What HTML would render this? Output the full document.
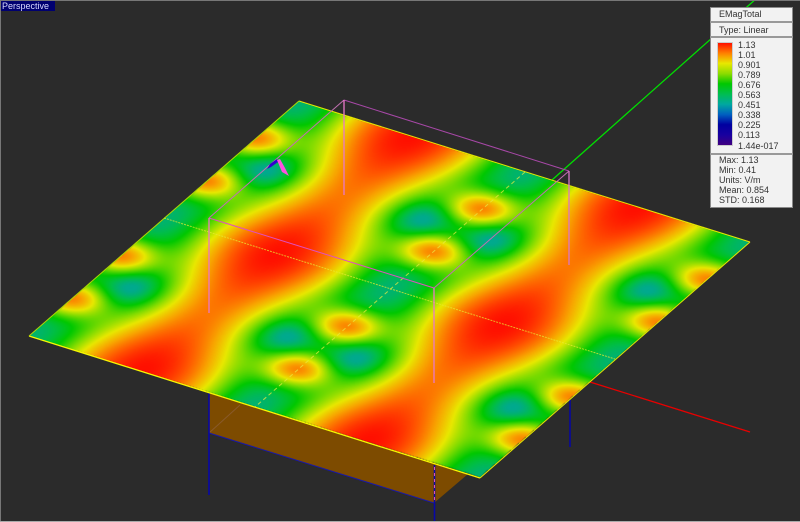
<!DOCTYPE html>
<html><head><meta charset="utf-8">
<style>
html,body{margin:0;padding:0;background:#2b2b2b}
#v{position:relative;width:800px;height:522px;overflow:hidden;background:#2b2b2b;font-family:"Liberation Sans",sans-serif}
#v>svg,#v>canvas{position:absolute;left:0;top:0}
#bt{position:absolute;left:0;top:0;width:800px;height:1px;background:#777}
#bl{position:absolute;left:0;top:0;width:1px;height:522px;background:#777}
#bb{position:absolute;left:0;top:521px;width:800px;height:1px;background:#aaa}
#pl{position:absolute;left:1px;top:1px;width:54px;height:10px;background:#000070;color:#d8d8ff;font-size:9px;line-height:10px;padding-left:1px;box-sizing:border-box}
#pn{position:absolute;left:710px;top:7px;width:83px;height:201px;background:#f2f2f2;box-shadow:0 0 0 1px #8a8a8a inset;font-size:9px;color:#333}
.s{position:absolute;left:0;width:83px;height:2px;background:#999}
.t{position:absolute;white-space:nowrap;line-height:10px}
#bar{position:absolute;left:8px;top:36px;width:14px;height:102px;background:linear-gradient(to bottom,#ff1000 0%,#ff8000 10%,#e8e800 20%,#8cdc00 30%,#00c800 40%,#00be50 50%,#00a8a0 60%,#0060c0 70%,#0000a0 80%,#1800a0 90%,#400080 100%);box-shadow:0 0 0 1px #ccc}
</style></head><body><div id="v">
<svg width="800" height="522" viewBox="0 0 800 522">
<polygon points="209,393 209,433 434,503 468,474 480,478" fill="#7d4b00"/>
<line x1="209" y1="433" x2="240" y2="405" stroke="#8a5a2a" stroke-width="1"/>
<line x1="209" y1="433" x2="434" y2="503" stroke="#1818a8" stroke-width="1"/>
<line x1="209" y1="393" x2="209" y2="495" stroke="#0808a8" stroke-width="1.6"/>
<line x1="434.5" y1="465" x2="434.5" y2="522" stroke="#0808a8" stroke-width="1.6"/>
<line x1="434.5" y1="467" x2="434.5" y2="503" stroke="#e050c0" stroke-width="1" stroke-dasharray="3 3"/>
<line x1="570" y1="400" x2="570" y2="447" stroke="#0808a0" stroke-width="1.6"/>
<line x1="590" y1="382" x2="750" y2="432" stroke="#e80000" stroke-width="1.3"/>
<line x1="552" y1="180" x2="757" y2="-2" stroke="#00e000" stroke-width="1.3"/>
<line x1="344" y1="100" x2="569" y2="171" stroke="#a848a8" stroke-width="1"/>
</svg>
<canvas id="c" width="800" height="522"></canvas>
<svg width="800" height="522" viewBox="0 0 800 522">
<g fill="none">
<line x1="299" y1="101" x2="750" y2="242" stroke="#e8e800" stroke-width="1"/>
<line x1="750" y1="242" x2="480" y2="478" stroke="#e8e800" stroke-width="1"/>
<line x1="480" y1="478" x2="29" y2="336" stroke="#f8f800" stroke-width="1.3"/>
<line x1="29" y1="336" x2="299" y2="101" stroke="#b0d800" stroke-width="1"/>
<line x1="164" y1="218" x2="615" y2="359" stroke="#e8e830" stroke-width="1" stroke-dasharray="2 1" opacity=".75"/>
<line x1="525" y1="172" x2="255" y2="407" stroke="#e8e840" stroke-width="1" stroke-dasharray="4 3" opacity=".75"/>
<line x1="344" y1="100" x2="209" y2="218" stroke="#c070b0" stroke-width="1"/>
<line x1="209" y1="218" x2="434" y2="288" stroke="#e050c0" stroke-width="1"/>
<line x1="434" y1="288" x2="569" y2="171" stroke="#c070b0" stroke-width="1"/>
<line x1="344" y1="100" x2="344" y2="195" stroke="#e878c8" stroke-width="1.3"/>
<line x1="569" y1="171" x2="569" y2="265" stroke="#d878c8" stroke-width="1.3"/>
<line x1="434" y1="288" x2="434" y2="383" stroke="#e878c8" stroke-width="1.3"/>
<line x1="209" y1="218" x2="209" y2="313" stroke="#e878c8" stroke-width="1.3"/>
</g>
<polygon points="277,159 278,162 271,167 267,169 270,164" fill="#3000d0"/>
<polygon points="277,160 280,159 285,168 289,176 282,172" fill="#ff50e0"/>
</svg>
<div id="bt"></div><div id="bl"></div><div id="bb"></div>
<div id="pl">Perspective</div>
<div id="pn">
<div class="t" style="left:9px;top:2px">EMagTotal</div>
<div class="s" style="top:14px"></div>
<div class="t" style="left:9px;top:18px">Type: Linear</div>
<div class="s" style="top:29px"></div>
<div id="bar"></div>
<div class="t" style="left:28px;top:33px">1.13</div>
<div class="t" style="left:28px;top:43px">1.01</div>
<div class="t" style="left:28px;top:53px">0.901</div>
<div class="t" style="left:28px;top:63px">0.789</div>
<div class="t" style="left:28px;top:73px">0.676</div>
<div class="t" style="left:28px;top:83px">0.563</div>
<div class="t" style="left:28px;top:93px">0.451</div>
<div class="t" style="left:28px;top:103px">0.338</div>
<div class="t" style="left:28px;top:113px">0.225</div>
<div class="t" style="left:28px;top:123px">0.113</div>
<div class="t" style="left:28px;top:134px">1.44e-017</div>
<div class="s" style="top:146px"></div>
<div class="t" style="left:9px;top:148px">Max: 1.13</div>
<div class="t" style="left:9px;top:158px">Min: 0.41</div>
<div class="t" style="left:9px;top:168px">Units: V/m</div>
<div class="t" style="left:9px;top:178px">Mean: 0.854</div>
<div class="t" style="left:9px;top:188px">STD: 0.168</div>
</div>
<script>
(function(){
var c=document.getElementById('c'),x=c.getContext('2d'),im=x.createImageData(800,522),d=im.data;
var st=[[.36,0,165,160],[.42,0,170,140],[.50,0,190,70],[.58,0,200,0],[.70,130,220,0],[.80,232,232,0],[.90,248,165,0],[1.0,255,90,0],[1.10,255,15,0]];
function col(f){
 if(f<=st[0][0])return st[0];
 for(var i=1;i<st.length;i++){if(f<=st[i][0]){var a=st[i-1],b=st[i],t=(f-a[0])/(b[0]-a[0]);return [0,a[1]+(b[1]-a[1])*t,a[2]+(b[2]-a[2])*t,a[3]+(b[3]-a[3])*t];}}
 return st[st.length-1];
}
function g(a,b,sa,sb){return Math.exp(-(a*a)/(2*sa*sa)-(b*b)/(2*sb*sb));}
function fold(t){var m=(t+.25)%.5;if(m<0)m+=.5;return Math.abs(m-.25);}
var det=144055;
for(var py=0;py<522;py++){for(var px=0;px<800;px++){
 var dx=px+.5-299,dy=py+.5-101;
 var u=(235*dx+270*dy)/det,v=(-141*dx+451*dy)/det;
 if(u<0||u>1||v<0||v>1)continue;
 var cu=fold(u),cv=fold(v);
 var p=4*Math.PI*cu,q=4*Math.PI*cv,w=(1-Math.cos(p))/2,sp=Math.sin(p);
 var f=.45+.58*w+.07*Math.cos(q)*w+.06*Math.cos(q)*sp*sp;
 f+=.50*(g(cu,cv-.16,.05,.048)+g(cu,cv-.34,.05,.048)+g(cu,cv+.16,.05,.048));
 f-=.16*(g(cu-.08,cv-.25,.042,.05)+g(cu+.08,cv-.25,.042,.05));
 var k=col(f),o=(py*800+px)*4;
 d[o]=k[1];d[o+1]=k[2];d[o+2]=k[3];d[o+3]=255;
}}
x.putImageData(im,0,0);
})();
</script>
</div></body></html>
